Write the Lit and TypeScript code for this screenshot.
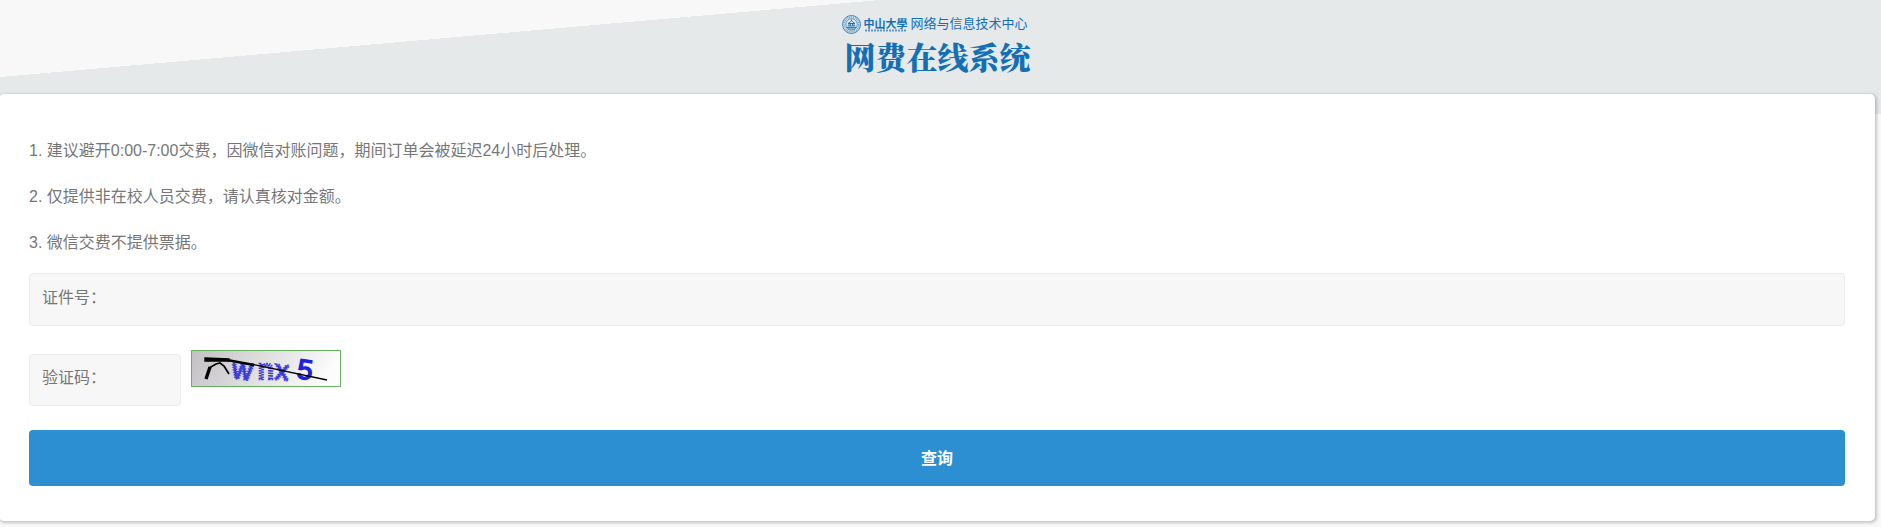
import { LitElement, html, css } from "lit";
import { customElement } from "lit/decorators.js";

@customElement("site-logo")
class SiteLogo extends LitElement {
  static styles = css`
    :host {
      display: block;
      width: 192px;
      color: #1470b4;
      font-family: "Liberation Sans", "Noto Sans CJK SC", sans-serif;
    }
    .top {
      display: flex;
      align-items: center;
      gap: 3px;
      height: 20px;
      white-space: nowrap;
    }
    .seal {
      flex: none;
      width: 19px;
      height: 19px;
    }
    .school {
      display: grid;
      justify-items: stretch;
      font: 700 11px/12px "Noto Sans CJK TC", sans-serif;
    }
    .rule {
      width: 44px;
      height: 3px;
    }
    .center {
      font-size: 13px;
      line-height: 20px;
    }
    .title {
      margin: 3px 0 0 3px;
      font: 900 31px/38px "Noto Serif CJK SC", "Noto Sans CJK SC", serif;
      white-space: nowrap;
    }
  `;
  render() {
    return html`
      <div class="top">
        <svg class="seal" viewBox="0 0 38 38" fill="none" stroke="currentColor" aria-hidden="true">
          <circle cx="19" cy="19" r="18" stroke-width="1.6" />
          <circle cx="19" cy="19" r="14.8" stroke-width="3" stroke-dasharray="2.2 1.6" opacity=".6" />
          <circle cx="19" cy="19" r="11.5" stroke-width="1.4" />
          <path d="M9 25h20M11 22h16M14 22v-5h10v5M12 17l7-5 7 5zM19 12V9M17 22v-4M21 22v-4M12 28h14" stroke-width="1.7" />
        </svg>
        <span class="school">
          <span>中山大學</span>
          <svg class="rule" viewBox="0 0 44 3" aria-hidden="true">
            <path d="M1 1.5h42" stroke="currentColor" stroke-width="2" stroke-dasharray="2 1" opacity=".65" />
          </svg>
        </span>
        <span class="center">网络与信息技术中心</span>
      </div>
      <h1 class="title">网费在线系统</h1>
    `;
  }
}

@customElement("captcha-image")
class CaptchaImage extends LitElement {
  static styles = css`
    :host {
      display: block;
      width: 150px;
      height: 37px;
    }
    svg {
      display: block;
      width: 100%;
      height: 100%;
    }
    .glyph {
      font: 400 28px "Liberation Sans", sans-serif;
      fill: #2020dc;
      stroke: #2020dc;
      stroke-width: 1.4;
    }
    .rough {
      fill: #cfcddd;
      stroke: #3a3ad0;
      stroke-width: 2.6;
      stroke-dasharray: 1.5 1;
    }
    .frayed {
      stroke: #4444dd;
      stroke-width: 2.4;
      stroke-dasharray: 1.5 1;
    }
  `;
  render() {
    return html`
      <svg viewBox="0 0 150 37" role="img" aria-label="验证码图片">
        <defs>
          <linearGradient id="bg" x1="0" y1="0" x2="1" y2="0.15">
            <stop offset="0" stop-color="#c2c0c2" />
            <stop offset="1" stop-color="#fcfcfc" />
          </linearGradient>
        </defs>
        <rect x=".5" y=".5" width="149" height="36" fill="url(#bg)" stroke="#6ab062" />
        <text class="glyph frayed" x="41" y="29" transform="rotate(6 51 22)">w</text>
        <text class="glyph rough" x="67" y="29">n</text>
        <text class="glyph frayed" x="84" y="30" transform="rotate(5 92 22)">x</text>
        <text class="glyph" x="106" y="29" transform="rotate(8 113 22)">5</text>
        <g fill="none" stroke="#000">
          <path d="M15 29l4-12" stroke-width="3.4" />
          <path d="M18 18l7-4 4-1 4 3 5 8" stroke-width="1.8" />
          <path d="M14 8l24 1v2l-24 0z" fill="#000" stroke-width="1.4" />
          <path d="M36 10l27 5" stroke-width="2.4" />
          <path d="M60 14l76 16" stroke-width="1.4" />
        </g>
      </svg>
    `;
  }
}

@customElement("app-root")
class AppRoot extends LitElement {
  static styles = css`
    :host {
      display: block;
      min-height: 100vh;
      background: #f8f8f8;
      color: #777;
      font: 16px/24px "Liberation Sans", "Noto Sans CJK SC", sans-serif;
    }
    * {
      box-sizing: border-box;
    }
    .banner {
      display: flex;
      justify-content: center;
      height: 114px;
      padding: 14px 6px 0 0;
      background: #e5e9ea;
      background-image: linear-gradient(
        to bottom right,
        #f8f8f8 50%,
        transparent 50%
      );
      background-size: 880px 77px;
      background-repeat: no-repeat;
    }
    .card {
      position: relative;
      margin: -20px 6px 0 -1px;
      padding: 34px 30px 35px;
      background: #fff;
      border-radius: 5px;
      box-shadow: 1px 1px 3px 1px rgba(0, 0, 0, 0.2);
    }
    .notice {
      margin: 0 0 7px;
      line-height: 46px;
    }
    .notice p {
      margin: 0;
    }
    .form {
      display: grid;
    }
    .field {
      width: 100%;
      height: 53px;
      padding: 8px 12px 12px;
      border: 1px solid #eaeaea;
      border-radius: 4px;
      background: #f7f7f7;
      color: #777;
      font: inherit;
    }
    .field::placeholder {
      color: #777;
      opacity: 1;
    }
    .row {
      display: flex;
      align-items: flex-start;
      gap: 10px;
      margin: 24px 0;
    }
    .code {
      width: 152px;
      margin-top: 4px;
      height: 52px;
    }
    .submit {
      height: 56px;
      padding: 2px 0 0;
      border: 0;
      border-radius: 4px;
      background: #2c8fd2;
      color: #fff;
      font: inherit;
      font-weight: 700;
      cursor: pointer;
    }
  `;
  render() {
    return html`
      <header class="banner"><site-logo></site-logo></header>
      <main class="card">
        <div class="notice">
          <p>1. 建议避开0:00-7:00交费，因微信对账问题，期间订单会被延迟24小时后处理。</p>
          <p>2. 仅提供非在校人员交费，请认真核对金额。</p>
          <p>3. 微信交费不提供票据。</p>
        </div>
        <form class="form" @submit=${(e: Event) => e.preventDefault()}>
          <input class="field" type="text" name="id" aria-label="证件号" placeholder="证件号：" />
          <div class="row">
            <input class="field code" type="text" name="code" aria-label="验证码" placeholder="验证码：" />
            <captcha-image></captcha-image>
          </div>
          <button class="submit" type="submit">查询</button>
        </form>
      </main>
    `;
  }
}
